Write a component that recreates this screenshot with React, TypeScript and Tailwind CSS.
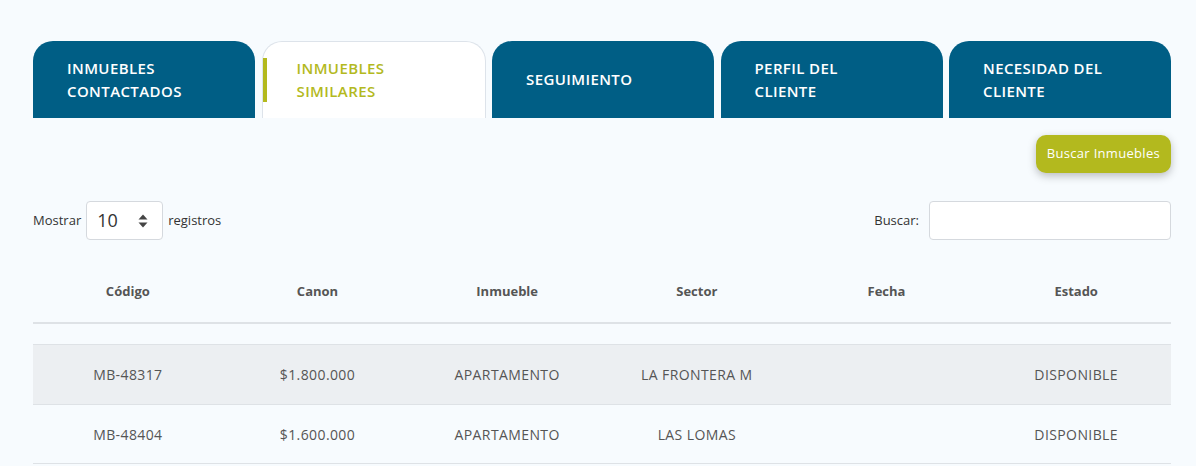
import React from "react";

const tabs = [
  { label: ["INMUEBLES", "CONTACTADOS"], active: false },
  { label: ["INMUEBLES", "SIMILARES"], active: true },
  { label: ["SEGUIMIENTO"], active: false },
  { label: ["PERFIL DEL", "CLIENTE"], active: false },
  { label: ["NECESIDAD DEL", "CLIENTE"], active: false },
];

const headers = ["Código", "Canon", "Inmueble", "Sector", "Fecha", "Estado"];
const rows = [
  ["MB-48317", "$1.800.000", "APARTAMENTO", "LA FRONTERA M", "", "DISPONIBLE"],
  ["MB-48404", "$1.600.000", "APARTAMENTO", "LAS LOMAS", "", "DISPONIBLE"],
];

export default function App() {
  return (
    <div
      className="w-[1196px] h-[466px] overflow-hidden bg-[#f7fbfe] pl-[33px] pr-[25px] pt-[41px] text-[#555]"
      style={{ fontFamily: '"Open Sans", "Noto Sans", sans-serif' }}
    >
      <div className="flex gap-[6.5px]">
        {tabs.map((t, i) => (
          <div
            key={i}
            className={
              "relative flex-1 h-[77px] rounded-t-[20px] flex items-center pl-[34px] text-[15px] leading-[23px] font-semibold tracking-[0.4px] " +
              (t.active
                ? "bg-white border border-b-0 border-[#dde3ea] text-[#b3b91e]"
                : "bg-[#005e85] text-white")
            }
          >
            {t.active && (
              <div className="absolute left-0 top-[16px] w-[4px] h-[44px] bg-[#b3b91e]" />
            )}
            <div>
              {t.label.map((l, j) => (
                <div key={j}>{l}</div>
              ))}
            </div>
          </div>
        ))}
      </div>

      <div className="flex justify-end mt-[17px]">
        <button className="h-[38px] px-[11px] rounded-[10px] bg-[#b3b91e] text-white text-[13px] font-medium tracking-[0.3px] shadow-[0_3px_8px_rgba(0,0,0,0.25)]">
          Buscar Inmuebles
        </button>
      </div>

      <div className="flex justify-between items-center mt-[28px] text-[13px] text-[#333]">
        <div className="flex items-center gap-[5px]">
          <span>Mostrar</span>
          <div className="w-[77px] h-[39px] bg-white border border-[#d5d9de] rounded-[4px] flex items-center justify-between pl-[10px] pr-[14px]">
            <span className="text-[18px] text-[#333]">10</span>
            <svg width="10" height="14" viewBox="0 0 10 14">
              <path d="M5 0.5 L9.5 5.5 L0.5 5.5 Z" fill="#444" />
              <path d="M5 13.5 L9.5 8.5 L0.5 8.5 Z" fill="#444" />
            </svg>
          </div>
          <span>registros</span>
        </div>
        <div className="flex items-center gap-[10px]">
          <span>Buscar:</span>
          <div className="w-[242px] h-[39px] bg-white border border-[#d5d9de] rounded-[4px]" />
        </div>
      </div>

      <div className="mt-[22px]">
        <div className="grid grid-cols-6 h-[62px] items-center border-b-2 border-[#dee2e6] text-[13px] font-bold text-[#555]">
          {headers.map((h) => (
            <div key={h} className="text-center">
              {h}
            </div>
          ))}
        </div>
        <div className="h-[20px]" />
        {rows.map((r, i) => (
          <div
            key={i}
            className={
              "grid grid-cols-6 h-[60px] items-center border-t border-[#dee2e6] text-[14px] tracking-[0.4px] text-[#555] " +
              (i === 0 ? "bg-[#eceff2]" : "border-b")
            }
          >
            {r.map((c, j) => (
              <div key={j} className="text-center">
                {c}
              </div>
            ))}
          </div>
        ))}
      </div>
    </div>
  );
}
